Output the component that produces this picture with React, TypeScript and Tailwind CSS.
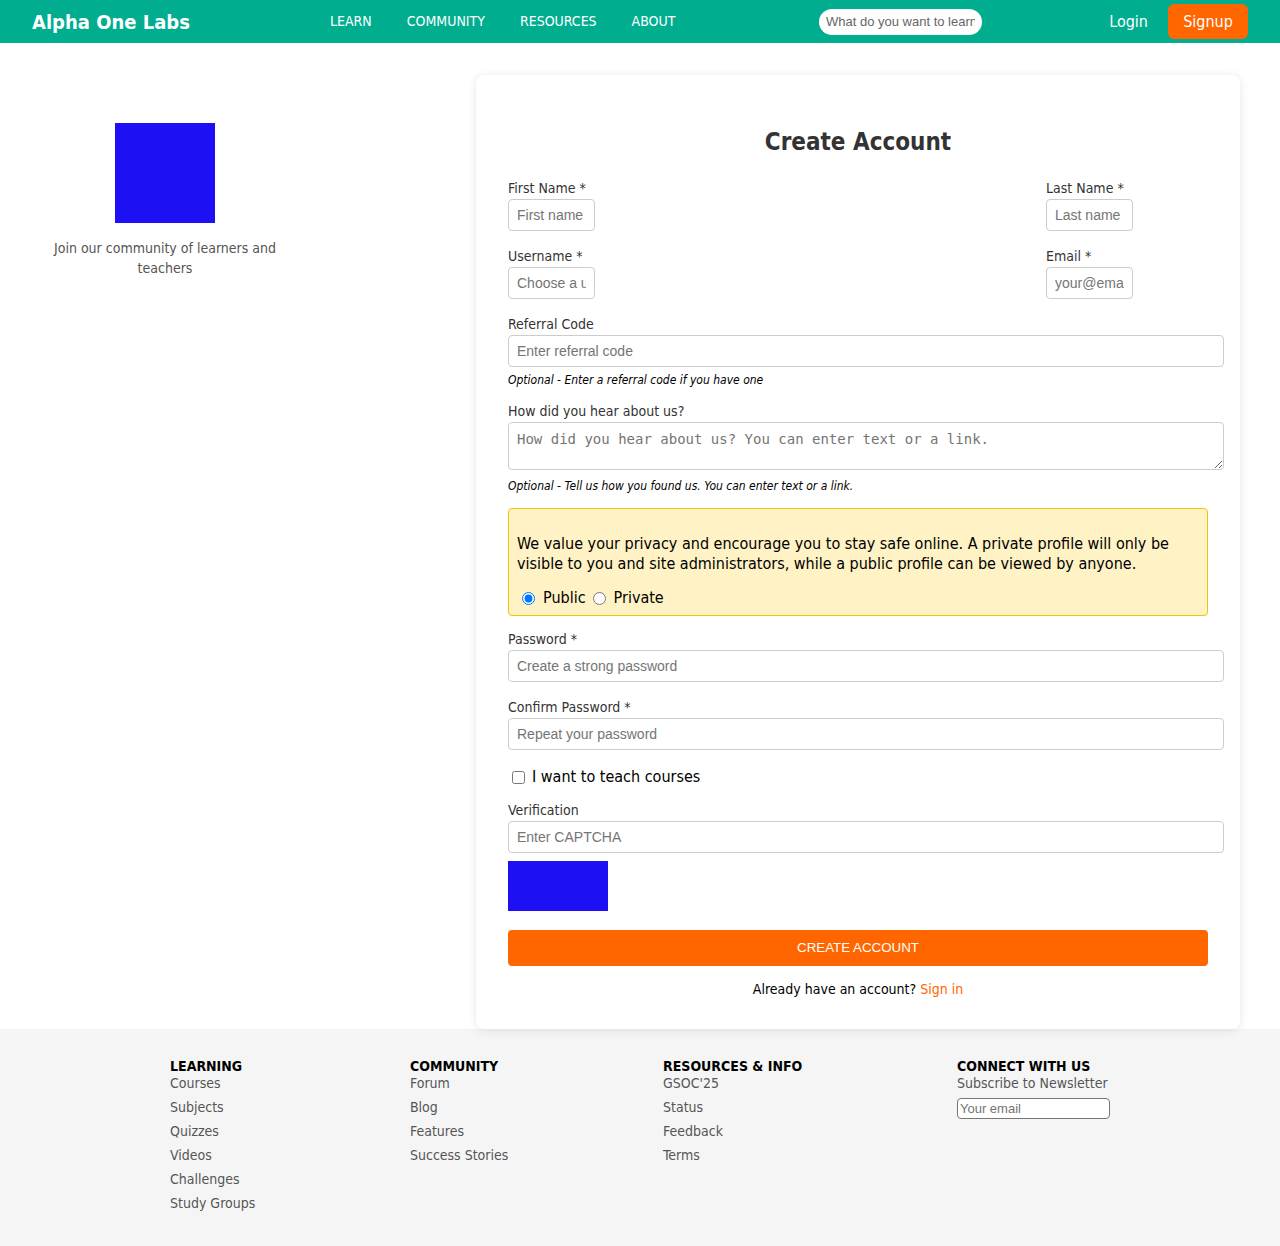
const body = "font-[family-name:'DejaVu_Sans_Condensed','DejaVu_Sans',sans-serif]";
const arial = "font-[family-name:'Liberation_Sans',Arial,sans-serif]";

function Field({ label, placeholder, narrow }: { label: string; placeholder: string; narrow?: boolean }) {
  return (
    <div>
      <label className="block text-[14px] leading-[21px] text-[#333]">{label}</label>
      <input
        placeholder={placeholder}
        className={`${arial} block h-8 rounded border border-[#ccc] bg-white px-2 text-[14px] placeholder:text-[#757575] ${
          narrow ? "w-[87px]" : "w-[calc(100%+16px)]"
        }`}
      />
    </div>
  );
}

const footer = [
  { title: "LEARNING", links: ["Courses", "Subjects", "Quizzes", "Videos", "Challenges", "Study Groups"] },
  { title: "COMMUNITY", links: ["Forum", "Blog", "Features", "Success Stories"] },
  { title: "RESOURCES & INFO", links: ["GSOC'25", "Status", "Feedback", "Terms"] },
];

export default function App() {
  return (
    <div className={`${body} min-h-[1246px] bg-white`}>
      <header className="flex h-[43px] items-center bg-[#00ae8f] px-8 text-white">
        <div className="w-[298px] text-[20px] font-bold">Alpha One Labs</div>
        <nav className="flex w-[489px] gap-[35px] text-[14px]">
          <a>LEARN</a>
          <a>COMMUNITY</a>
          <a>RESOURCES</a>
          <a>ABOUT</a>
        </nav>
        <input
          placeholder="What do you want to learn?"
          className={`${arial} h-[26px] w-[163px] rounded-full bg-white px-[7px] text-[13px] text-black placeholder:text-[#666]`}
        />
        <div className="ml-auto flex items-center gap-5">
          <a className="text-[16px]">Login</a>
          <button className="h-[35px] w-20 rounded-md bg-[#ff6600] text-[16px] text-white">Signup</button>
        </div>
      </header>

      <main className="flex px-10 pt-8">
        <div className="flex w-[250px] flex-col items-center pt-12">
          <div className="h-[100px] w-[100px] bg-[#1e10f5]" />
          <p className="mt-[15px] text-center text-[14px] leading-[20px] text-[#555]">
            Join our community of learners and
            <br />
            teachers
          </p>
        </div>

        <div className="ml-auto w-[764px] rounded-lg bg-white px-8 pb-[29px] pt-[51px] shadow-[0_1px_10px_rgba(0,0,0,0.1)]">
          <h1 className="mb-[20px] text-center text-[24px] font-bold leading-8 text-[#333]">Create Account</h1>

          <div className="flex justify-between">
            <Field label="First Name *" placeholder="First name" narrow />
            <div className="w-[162px]">
              <Field label="Last Name *" placeholder="Last name" narrow />
            </div>
          </div>
          <div className="mt-[15px] flex justify-between">
            <Field label="Username *" placeholder="Choose a username" narrow />
            <div className="w-[162px]">
              <Field label="Email *" placeholder="your@email.com" narrow />
            </div>
          </div>

          <div className="mt-[15px]">
            <Field label="Referral Code" placeholder="Enter referral code" />
            <p className="mt-[4px] text-[12px] italic leading-[18px] text-black">
              Optional - Enter a referral code if you have one
            </p>
          </div>

          <div className="mt-3">
            <label className="block text-[14px] leading-[21px] text-[#333]">How did you hear about us?</label>
            <textarea
              placeholder="How did you hear about us? You can enter text or a link."
              className="block h-12 w-[calc(100%+16px)] rounded border border-[#ccc] px-2 py-[6px] font-['DejaVu_Sans_Mono',monospace] text-[14px] leading-5 placeholder:text-[#757575]"
            />
            <p className="mt-[7px] text-[12px] italic leading-[18px] text-black">
              Optional - Tell us how you found us. You can enter text or a link.
            </p>
          </div>

          <div className="mt-[13px] rounded border border-[#f5c400] bg-[#fff2c4] px-2 pb-[5px] pt-[25px] text-[16px] text-black">
            <p className="leading-5">
              We value your privacy and encourage you to stay safe online. A private profile will only be
              <br />
              visible to you and site administrators, while a public profile can be viewed by anyone.
            </p>
            <div className="mt-3 flex h-6 items-center">
              <input type="radio" name="vis" defaultChecked className="my-0 ml-[5px] mr-[8px] h-[13px] w-[13px]" />
              <span>Public</span>
              <input type="radio" name="vis" className="ml-[7px] mr-[8px] h-[13px] w-[13px]" />
              <span>Private</span>
            </div>
          </div>

          <div className="mt-[13px]">
            <Field label="Password *" placeholder="Create a strong password" />
          </div>
          <div className="mt-[15px]">
            <Field label="Confirm Password *" placeholder="Repeat your password" />
          </div>

          <label className="mt-[15px] flex h-6 items-center text-[16px] text-black">
            <input type="checkbox" className="ml-1 mr-[7px] h-[13px] w-[13px]" />
            I want to teach courses
          </label>

          <div className="mt-[11px]">
            <Field label="Verification" placeholder="Enter CAPTCHA" />
          </div>
          <div className="mt-2 h-[50px] w-[100px] bg-[#1e10f5]" />

          <button className={`${arial} mt-[19px] h-9 w-full rounded bg-[#ff6600] text-[13.33px] text-white`}>
            CREATE ACCOUNT
          </button>
          <p className="mt-[13px] text-center text-[14px] leading-[21px] text-black">
            Already have an account? <a className="text-[#ff6600]">Sign in</a>
          </p>
        </div>
      </main>

      <footer className="bg-[#f5f5f5] pb-[34px] pt-[29px]">
        <div className="mx-auto flex w-[940px] justify-between text-[14px] leading-[17px]">
          {footer.map((col) => (
            <div key={col.title}>
              <h3 className="font-bold text-black">{col.title}</h3>
              <ul className="space-y-[7px] text-[#555]">
                {col.links.map((l) => (
                  <li key={l}>{l}</li>
                ))}
              </ul>
            </div>
          ))}
          <div>
            <h3 className="font-bold text-black">CONNECT WITH US</h3>
            <p className="text-[#555]">Subscribe to Newsletter</p>
            <input
              placeholder="Your email"
              className={`${arial} mt-[6px] block h-[21px] w-[153px] rounded-sm border border-[#767676] bg-white px-[2px] text-[13px] placeholder:text-[#757575]`}
            />
          </div>
        </div>
      </footer>
    </div>
  );
}
